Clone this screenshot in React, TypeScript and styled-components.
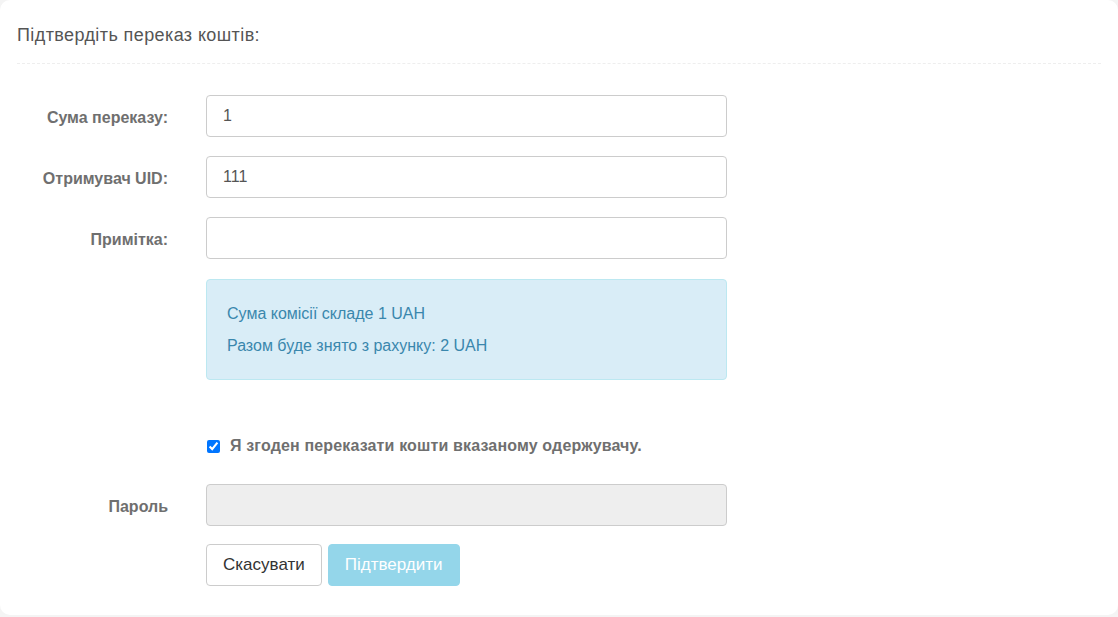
import React from 'react';
import styled, { createGlobalStyle } from 'styled-components';

const GlobalStyle = createGlobalStyle`
  html, body {
    margin: 0;
    padding: 0;
    background: #f4f4f4;
    font-family: "Liberation Sans", Arial, sans-serif;
  }
`;

const Panel = styled.div`
  box-sizing: border-box;
  width: 1118px;
  height: 615px;
  background: #fff;
  border-radius: 10px;
  padding: 0 17px;
`;

const Header = styled.div`
  box-sizing: border-box;
  height: 64px;
  padding-top: 8px;
  display: flex;
  align-items: center;
  border-bottom: 1px dashed #eee;
`;

const Title = styled.h3`
  margin: 0;
  font-size: 18px;
  letter-spacing: 0.4px;
  font-weight: 400;
  color: #555;
`;

const Form = styled.form`
  padding-top: 31px;
`;

const Row = styled.div<{ $mt?: number }>`
  display: grid;
  grid-template-columns: 151px 521px;
  column-gap: 38px;
  align-items: center;
  margin-top: ${({ $mt }) => $mt ?? 0}px;
`;

const Label = styled.label`
  padding-top: 3px;
  text-align: right;
  font-size: 16px;
  font-weight: 700;
  color: #6f6f6f;
`;

const Input = styled.input`
  box-sizing: border-box;
  height: 42px;
  width: 100%;
  padding: 0 16px;
  border: 1px solid #ccc;
  border-radius: 4px;
  font-family: inherit;
  font-size: 16px;
  color: #555;
  background: #fff;
  outline: none;

  &:disabled {
    background: #eee;
  }
`;

const Alert = styled.div`
  box-sizing: border-box;
  height: 101px;
  padding: 24px 20px 0;
  background: #d9edf7;
  border: 1px solid #bce8f1;
  border-radius: 4px;
  color: #3a87ad;
  font-size: 16px;
  line-height: 20px;

  p {
    margin: 0 0 12px;
  }
`;

const CheckLabel = styled.label`
  display: flex;
  align-items: center;
  gap: 10px;
  font-size: 16px;
  letter-spacing: 0.15px;
  font-weight: 700;
  color: #6f6f6f;
  line-height: 20px;

  input {
    margin: 0 0 0 1px;
    width: 13px;
    height: 13px;
  }
`;

const Actions = styled.div`
  display: flex;
  gap: 6px;
`;

const Button = styled.button<{ $primary?: boolean }>`
  box-sizing: border-box;
  height: 42px;
  padding: 0 16px;
  border-radius: 4px;
  font-family: inherit;
  font-size: 17px;
  border: 1px solid ${({ $primary }) => ($primary ? '#94d6ea' : '#ccc')};
  background: ${({ $primary }) => ($primary ? '#94d6ea' : '#fff')};
  color: ${({ $primary }) => ($primary ? '#fff' : '#333')};
`;

export default function App() {
  return (
    <>
      <GlobalStyle />
      <Panel>
        <Header>
          <Title>Підтвердіть переказ коштів:</Title>
        </Header>
        <Form onSubmit={(e) => e.preventDefault()}>
          <Row>
            <Label>Сума переказу:</Label>
            <Input defaultValue="1" />
          </Row>
          <Row $mt={19}>
            <Label>Отримувач UID:</Label>
            <Input defaultValue="111" />
          </Row>
          <Row $mt={19}>
            <Label>Примітка:</Label>
            <Input defaultValue="" />
          </Row>
          <Row $mt={20}>
            <span />
            <Alert>
              <p>Сума комісії складе 1 UAH</p>
              <p>Разом буде знято з рахунку: 2 UAH</p>
            </Alert>
          </Row>
          <Row $mt={56}>
            <span />
            <CheckLabel>
              <input type="checkbox" defaultChecked />
              Я згоден переказати кошти вказаному одержувачу.
            </CheckLabel>
          </Row>
          <Row $mt={28}>
            <Label>Пароль</Label>
            <Input type="password" disabled />
          </Row>
          <Row $mt={18}>
            <span />
            <Actions>
              <Button type="button">Скасувати</Button>
              <Button type="button" $primary disabled>
                Підтвердити
              </Button>
            </Actions>
          </Row>
        </Form>
      </Panel>
    </>
  );
}
